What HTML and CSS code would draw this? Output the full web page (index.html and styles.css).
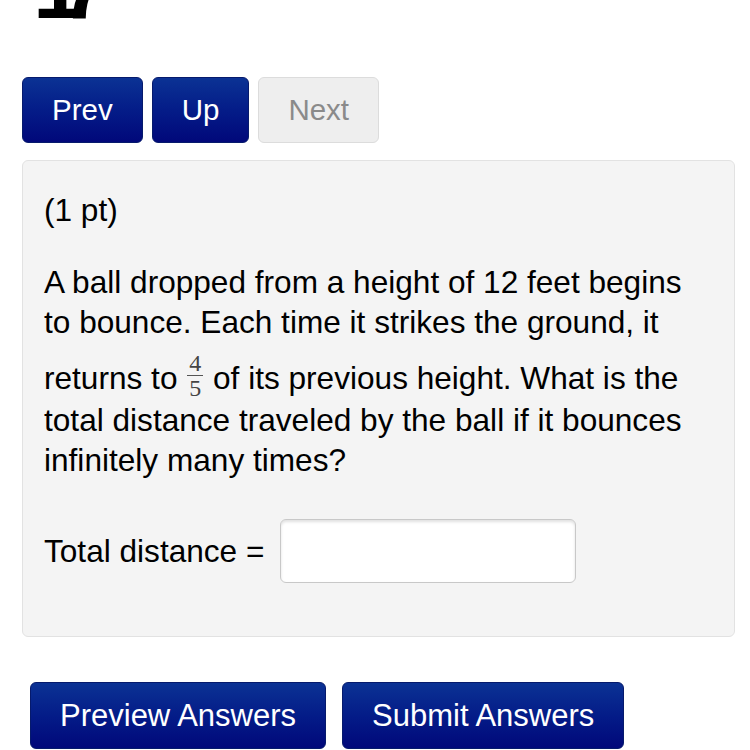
FILE: index.html
```html
<!DOCTYPE html>
<html>
<head>
<meta charset="utf-8">
<link rel="stylesheet" href="styles.css">
</head>
<body>
<h1 class="title">17</h1>
<nav class="nav">
  <a class="btn btn-primary">Prev</a>
  <a class="btn btn-primary">Up</a>
  <a class="btn btn-disabled">Next</a>
</nav>
<div class="problem">
  <p class="pts">(1 pt)</p>
  <p class="question">A ball dropped from a height of 12 feet begins to bounce. Each time it strikes the ground, it returns to <span class="frac"><span class="num">4</span><span class="den">5</span></span> of its previous height. What is the total distance traveled by the ball if it bounces infinitely many times?</p>
  <div class="answer-row">
    <label class="answer-label">Total distance =</label>
    <input class="answer-input" type="text">
  </div>
</div>
<div class="submit-row">
  <button class="btn btn-primary btn-big">Preview Answers</button>
  <button class="btn btn-primary btn-big">Submit Answers</button>
</div>
</body>
</html>
```
FILE: styles.css
```css
html, body {
  margin: 0;
  padding: 0;
  background: #fff;
}
body {
  font-family: "Liberation Sans", Arial, Helvetica, sans-serif;
  color: #000;
  padding-left: 22px;
  width: 713px;
}
.title {
  margin: -58px 0 0 11px;
  font-size: 90px;
  line-height: 90px;
  font-weight: bold;
  letter-spacing: -23px;
  color: #000;
}
.nav {
  display: flex;
  gap: 9px;
  margin-top: 45px;
}
.btn {
  display: inline-flex;
  align-items: center;
  justify-content: center;
  box-sizing: border-box;
  height: 66px;
  padding: 0 29px;
  font-family: "Liberation Sans", Arial, sans-serif;
  font-size: 29.5px;
  border-radius: 6px;
  text-decoration: none;
}
.btn-primary {
  color: #fff;
  background: linear-gradient(to bottom, #0b3294 0%, #041c88 50%, #01087a 100%);
  border: 1px solid #061a6c;
}
.btn-disabled {
  color: #8a8a8a;
  background: #eeeeee;
  border: 1px solid #dcdcdc;
}
.problem {
  margin-top: 17px;
  background: #f4f4f4;
  border: 1px solid #e2e2e2;
  border-radius: 6px;
  padding: 29px 21px 53px 21px;
  font-size: 31.6px;
  line-height: 40px;
  color: #000;
}
.pts {
  margin: 0;
}
.question {
  margin: 32px 0 0 0;
}
.frac {
  display: inline-block;
  vertical-align: -7px;
  font-family: "Liberation Serif", "Times New Roman", serif;
  font-size: 24px;
  line-height: 24px;
  text-align: center;
  color: #444;
  padding-top: 9px;
  margin: 0 1px;
}
.num, .den {
  display: block;
  padding: 0 2px;
}
.num {
  border-bottom: 1px solid #555;
}
.answer-row {
  display: flex;
  align-items: center;
  margin-top: 39px;
}
.answer-label {
  margin-right: 16px;
}
.answer-input {
  box-sizing: border-box;
  width: 296px;
  height: 64px;
  border: 1px solid #c8c8c8;
  border-radius: 6px;
  background: #fff;
  box-shadow: inset 0 2px 3px rgba(0,0,0,0.12);
  font-size: 28px;
  padding: 0 10px;
}
.submit-row {
  display: flex;
  gap: 16px;
  margin: 45px 0 0 8px;
}
.btn-big {
  font-size: 31px;
  padding: 0 29px;
  height: 67px;
}
```
